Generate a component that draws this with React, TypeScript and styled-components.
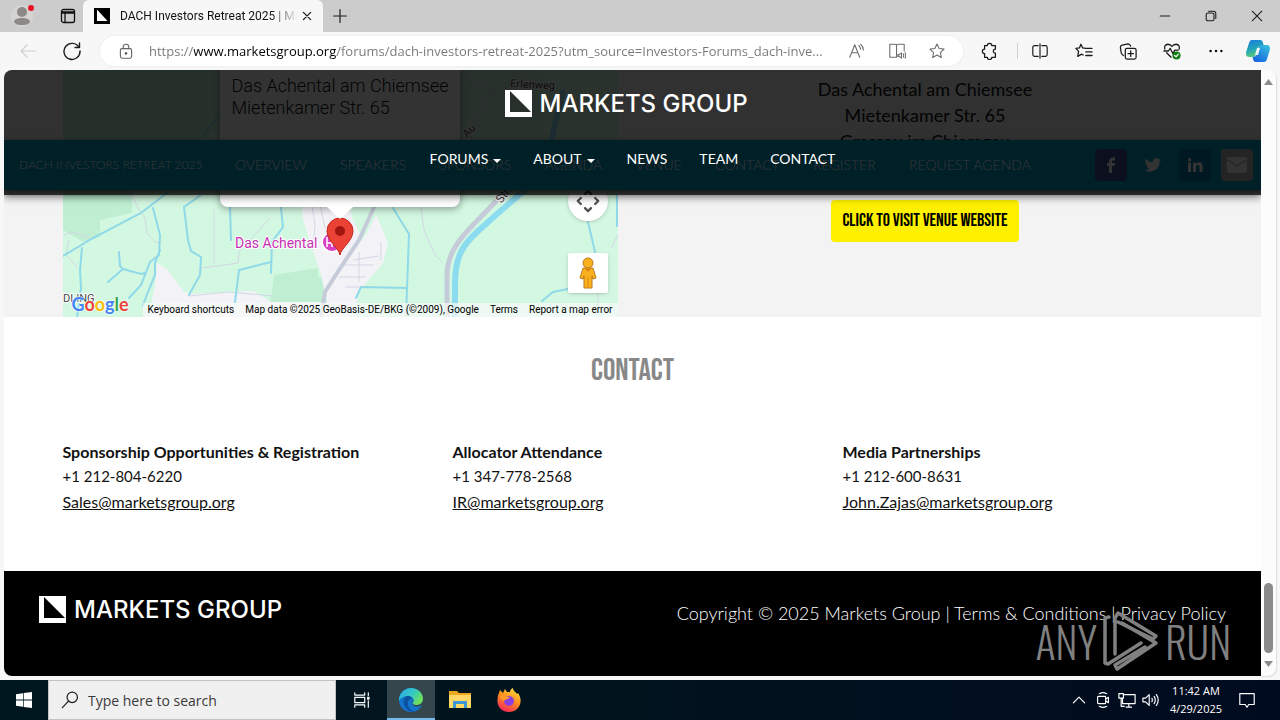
import React from "react";
import styled, { createGlobalStyle } from "styled-components";

const ui = `"Open Sans", "Noto Sans", sans-serif`;
const body = `Lato, "Open Sans", sans-serif`;
const narrow = `"Bebas Neue", "Oswald", "Liberation Sans Narrow", "Arial Narrow", sans-serif`;

const Global = createGlobalStyle`
  *, *::before, *::after { box-sizing: border-box; }
  body { margin: 0; background: #f7f7f7; font-family: ${body}; color: #111; }
  button { font: inherit; color: inherit; border: 0; padding: 0; background: none; }
  a { color: inherit; text-decoration: none; }
  h1, h2, h3, p, ul, address { margin: 0; padding: 0; font-style: normal; }
  ul { list-style: none; }
  svg { display: block; }
`;

const Desktop = styled.div`
  min-height: 100vh;
  display: flex;
  flex-direction: column;
`;

/* ---------- browser chrome ---------- */

const TabStrip = styled.header`
  display: flex;
  height: 32px;
  background: #cccccc;
  font-family: ${ui};
`;
const StripTools = styled.div`
  display: flex;
  align-items: center;
  gap: 24px;
  width: 83px;
  padding-left: 10px;
  border-radius: 0 0 6px 0;
`;
const Tab = styled.div`
  display: flex;
  align-items: center;
  width: 240px;
  padding: 0 10px 0 11px;
  background: #f7f7f7;
  border-radius: 6px 6px 0 0;
`;
const TabTitle = styled.span`
  flex: 1;
  margin-left: 10px;
  overflow: hidden;
  white-space: nowrap;
  font-family: Roboto, sans-serif;
  font-size: 12px;
  line-height: 16px;
  mask-image: linear-gradient(90deg, #000 150px, transparent 178px);
`;
const NewTab = styled.button`
  display: grid;
  place-items: center;
  width: 34px;
`;
const WindowButtons = styled.div`
  display: flex;
  margin-left: auto;
`;
const WindowButton = styled.button`
  display: grid;
  place-items: center;
  width: 46px;
`;

const Toolbar = styled.div`
  display: flex;
  align-items: center;
  height: 38px;
  padding: 0 2px 0 6px;
  background: #f7f7f7;
  font-family: ${ui};
`;
const ToolButton = styled.button<{ $w?: number }>`
  display: grid;
  place-items: center;
  flex: none;
  width: ${(p) => p.$w ?? 44}px;
  height: 30px;
`;
const ToolDivider = styled.span`
  width: 1px;
  height: 16px;
  margin: 0 0 0 5px;
  background: #cfcfcf;
`;
const AddressBar = styled.label`
  display: flex;
  align-items: center;
  flex: 1;
  min-width: 0;
  height: 30px;
  margin: 0 5px 0 6px;
  padding: 0 6px 0 18px;
  border-radius: 15px;
  background: #fff;
  box-shadow: 0 0 1px 1px #efefef;
`;
const AddressInput = styled.input`
  flex: 1;
  min-width: 0;
  margin-left: 15px;
  padding: 0;
  border: 0;
  outline: 0;
  font-family: ${ui};
  font-size: 13px;
  line-height: 20px;
  text-overflow: ellipsis;
  color: transparent;
  background: linear-gradient(90deg, #767676 45px, #000 45px, #000 187px, #767676 187px);
  background-clip: text;
  -webkit-background-clip: text;
`;

/* ---------- page frame ---------- */

const Viewport = styled.div`
  display: flex;
  flex: 1;
  padding: 0 4px 4px;
  background: #f7f7f7;
`;
const Page = styled.div`
  position: relative;
  display: flex;
  flex-direction: column;
  flex: 1;
  min-width: 0;
  overflow: hidden;
  border-radius: 8px 0 0 8px;
  background: #fff;
`;
const ScrollTrack = styled.div`
  display: flex;
  flex-direction: column;
  align-items: center;
  width: 15px;
  padding: 9px 0;
  border-radius: 0 8px 8px 0;
  background: #fcfcfc;
  box-shadow: 1px 1px 1px #dddddd;
`;
const ScrollThumb = styled.div`
  width: 9px;
  height: 70px;
  margin: auto 0 8px;
  border-radius: 5px;
  background: #8b8b8b;
`;

/* ---------- site header ---------- */

const SiteHeader = styled.header`
  position: absolute;
  inset: 0 0 auto 0;
  height: 125px;
  padding-top: 20px;
  display: flex;
  flex-direction: column;
  align-items: center;
  background: rgba(0, 0, 0, 0.8);
  box-shadow: 0 2px 8px rgba(0, 0, 0, 0.5);
  color: #fff;
`;
const Brand = styled.a`
  display: flex;
  align-items: center;
  gap: 8px;
  width: 256px;
  height: 27px;
  color: #fff;
  font-family: Inter, sans-serif;
  font-size: 24px;
  font-weight: 500;
  line-height: 27px;
  white-space: nowrap;
`;
const MainMenu = styled.ul`
  display: flex;
  gap: 32px;
  margin-top: 33px;
  font-size: 14px;
  line-height: 18px;
`;
const MenuLink = styled.a<{ $caret?: boolean }>`
  display: flex;
  align-items: center;
  gap: 5px;
  &::after {
    content: "";
    display: ${(p) => (p.$caret ? "block" : "none")};
    margin-top: 3px;
    border: 4px solid transparent;
    border-top-color: #fff;
    border-bottom: 0;
  }
`;

const EventBar = styled.nav`
  position: absolute;
  inset: 70px 0 auto 0;
  height: 50px;
  display: flex;
  align-items: center;
  padding: 0 8px 0 15px;
  background: #00a0c8;
  box-shadow: 0 2px 6px rgba(0, 0, 0, 0.6);
  color: #fff;
  font-weight: 300;
`;
const EventName = styled.a`
  width: 216px;
  font-size: 12px;
  line-height: 18px;
  white-space: nowrap;
`;
const EventLinks = styled.ul`
  display: flex;
  justify-content: space-between;
  width: 796px;
  font-size: 14px;
  line-height: 18px;
  white-space: nowrap;
`;
const SocialRow = styled.div`
  display: flex;
  gap: 10px;
  margin-left: auto;
`;
const Social = styled.a<{ $bg: string }>`
  display: grid;
  place-items: center;
  width: 32px;
  height: 32px;
  border-radius: 4px;
  background: ${(p) => p.$bg};
`;

/* ---------- venue ---------- */

const Container = styled.div`
  width: 100%;
  max-width: 1140px;
  margin: 0 auto;
`;
const Venue = styled.section`
  background: #f3f3f3;
`;
const VenueGrid = styled(Container)`
  display: grid;
  grid-template-columns: 1fr 1fr;
  gap: 30px;
`;
const VenueInfo = styled.div`
  display: flex;
  flex-direction: column;
  align-items: center;
  padding-top: 6px;
  text-align: center;
`;
const VenueAddress = styled.address`
  font-size: 18px;
  font-weight: 400;
  line-height: 26px;
`;
const VenueButton = styled.a`
  margin-top: 46px;
  padding: 0 11px;
  border-radius: 4px;
  background: #fff000;
  color: #000;
  font-family: ${narrow};
  font-size: 18px;
  font-weight: 400;
  line-height: 42px;
`;

const MapBox = styled.div`
  position: relative;
  height: 247px;
  overflow: hidden;
  background: #d3f8e2;
`;
const InfoWindow = styled.div`
  position: absolute;
  left: 157px;
  top: -20px;
  width: 240px;
  height: 157px;
  padding: 25px 12px;
  border-radius: 8px;
  background: #fff;
  box-shadow: 0 2px 7px 1px rgba(0, 0, 0, 0.3);
  font-family: Roboto, sans-serif;
  font-size: 18px;
  font-weight: 300;
  line-height: 22px;
  white-space: nowrap;
`;
const MapControl = styled.button<{ $top: number; $round?: boolean }>`
  position: absolute;
  right: 10px;
  top: ${(p) => p.$top}px;
  display: grid;
  place-items: center;
  width: 40px;
  height: 40px;
  border-radius: ${(p) => (p.$round ? "50%" : "2px")};
  background: #fff;
  box-shadow: 0 1px 4px -1px rgba(0, 0, 0, 0.3);
`;
const GoogleMark = styled.a`
  position: absolute;
  left: 9px;
  bottom: 2px;
  font-family: Lato, sans-serif;
  font-size: 18px;
  font-weight: 700;
  line-height: 22px;
  text-shadow: 0 0 2px #fff, 0 0 2px #fff;
`;
const Letter = styled.span<{ $c: string }>`
  color: ${(p) => p.$c};
`;
const MapCredits = styled.div`
  position: absolute;
  right: 0;
  bottom: 0;
  display: flex;
  gap: 11px;
  padding: 0 5px;
  background: rgba(245, 250, 247, 0.75);
  color: #000;
  font-family: Roboto, sans-serif;
  font-size: 10px;
  line-height: 14px;
  white-space: nowrap;
`;

/* ---------- contact ---------- */

const Contact = styled.section`
  flex: 1;
  padding: 34px 0 56px;
`;
const ContactTitle = styled.h2`
  color: #888;
  font-family: ${narrow};
  font-size: 31px;
  font-weight: 400;
  line-height: 40px;
  text-align: center;
`;
const ContactGrid = styled(Container)`
  display: grid;
  grid-template-columns: repeat(3, 1fr);
  gap: 30px;
  margin-top: 48px;
`;
const ContactCard = styled.div`
  font-size: 16px;
  line-height: 25px;
`;
const ContactName = styled.h3`
  font-size: 16px;
  font-weight: 700;
  line-height: 25px;
`;
const Phone = styled.p`
  font-size: 15px;
`;
const Mail = styled.a`
  text-decoration: underline;
`;

/* ---------- footer ---------- */

const Footer = styled.footer`
  position: relative;
  display: flex;
  justify-content: space-between;
  align-items: flex-start;
  min-height: 105px;
  padding: 25px 35px;
  background: #000;
  color: #fff;
`;
const Legal = styled.p`
  margin-top: 5px;
  font-size: 18px;
  font-weight: 300;
  line-height: 24px;
  white-space: nowrap;
`;
const Watermark = styled.div`
  position: absolute;
  right: 30px;
  bottom: 4px;
  display: flex;
  align-items: center;
  gap: 6px;
  color: #808080;
  font-family: "Oswald", "Liberation Sans Narrow", sans-serif;
  font-size: 42px;
  font-weight: 300;
  line-height: 62px;
`;

/* ---------- taskbar ---------- */

const Taskbar = styled.footer`
  display: flex;
  height: 40px;
  background: linear-gradient(90deg, #00171f 0%, #01141d 45%, #010b20 100%);
  color: #fff;
  font-family: ${ui};
`;
const TaskButton = styled.button<{ $w: number; $active?: boolean }>`
  display: grid;
  place-items: center;
  width: ${(p) => p.$w}px;
  height: 40px;
  background: ${(p) => (p.$active ? "#35464d" : "transparent")};
  box-shadow: ${(p) => (p.$active ? "inset 0 -2px #76b9ed" : "none")};
`;
const SearchBox = styled.label`
  display: flex;
  align-items: center;
  gap: 9px;
  width: 288px;
  padding: 0 12px;
  border: 1px solid #c4c4c4;
  background: #f0f0f0;
`;
const SearchInput = styled.input`
  flex: 1;
  min-width: 0;
  padding: 0;
  border: 0;
  outline: 0;
  background: none;
  font-family: ${ui};
  font-size: 14px;
  &::placeholder { color: #3a3a3a; opacity: 1; }
`;
const Tray = styled.div`
  display: flex;
  align-items: center;
  margin-left: auto;
  padding-right: 15px;
`;
const Clock = styled.button`
  width: 66px;
  font-size: 11px;
  line-height: 18px;
  text-align: center;
`;

/* ---------- drawings ---------- */

type IconProps = { size?: number; color?: string; sw?: number; children: React.ReactNode };
const Icon = ({ size = 20, color = "#1b1b1b", sw = 1.2, children }: IconProps) => (
  <svg width={size} height={size} viewBox="0 0 20 20" fill="none" stroke={color} strokeWidth={sw} strokeLinecap="round" strokeLinejoin="round" aria-hidden="true">
    {children}
  </svg>
);

const starPath = "M10 2.2l2.4 5 5.4.7-4 3.8 1 5.5-4.8-2.7-4.8 2.7 1-5.5-4-3.8 5.4-.7z";

const BrandMark = () => (
  <svg width="27" height="27" viewBox="0 0 27 27" aria-hidden="true">
    <path fill="#fff" fillRule="evenodd" d="M0 0H27V27H0ZM5 1V22H26Z" />
  </svg>
);

const Logo = () => (
  <Brand href="#home">
    <BrandMark />
    <span>MARKETS GROUP</span>
  </Brand>
);

const MapDrawing = () => (
  <svg width="100%" height="247" viewBox="0 0 555 247" preserveAspectRatio="xMidYMid slice" aria-hidden="true">
    <rect width="555" height="247" fill="#d3f8e2" />
    <path fill="#bfeed3" d="M0 0H160V60L69 100V143L37 150V167L20 172L0 160Z" />
    <path fill="#bfeed3" d="M211 205L255 198V207L267 209V236H207Z" />
    <path fill="#c6f1d8" d="M397 0H480V70L430 90L397 60Z" />
    <path fill="#f3f3f7" d="M94 193L104 199L121 222L130 224L190 221L208 232H264L258 205L240 150L238 120H310V137L325 173L320 193L297 220L290 247H86L92 215Z" />
    <path fill="#d3f8e2" d="M282 122H325L300 170L290 150Z" />
    <g fill="none" stroke="#d3d6e4" strokeWidth="1">
      <path d="M69 125L75 138L82 148L84 163L92 172H96" />
      <path d="M151 140V194M140 198L175 193L176 182L207 148" />
      <path d="M6 170L3 185L14 197M126 226L166 222L210 226" />
      <path d="M0 165L10 162L26 168M358 138L361 160L372 185L380 193" />
      <path d="M555 165L548 178M535 223V240" />
      <path d="M247 122L252 155L250 180M256 130L262 158M278 195H310M276 207H303M282 217H310M290 190L316 186M296 182V212M318 172V190" />
      <path d="M411 50L430 20L397 5M411 50L397 70" />
    </g>
    <g fill="none" stroke="#8fd9e8" strokeWidth="2" strokeLinecap="round">
      <path d="M0 186L30 168L78 143L105 122" />
      <path d="M19 178L17 200L18 218L14 247" />
      <path d="M90 138L97 165L96 185L87 192L78 215L66 228" />
      <path d="M97 180L92 193V205L85 222L80 235" />
      <path d="M56 182L57 196L60 199L45 212M60 199L78 204L82 203" />
      <path d="M138 125L121 137L125 170L128 181L138 187L137 205L126 225" />
      <path d="M167 137L168 170M216 120L220 157L209 172L208 203" />
      <path d="M172 232L176 200L208 192" />
      <path d="M330 138L346 164L343 246M293 228L298 217L344 218" />
      <path d="M525 152L532 182M479 231L490 222L505 219M554 125V156M505 100L515 120" />
      <path d="M140 66L157 44" />
    </g>
    <path d="M392 247V214C392 186 400 175 414 162L434 144L462 120L485 85L500 20" fill="none" stroke="#8cdcf0" strokeWidth="6" />
    <path d="M384 247V205C384 188 392 174 407 158L442 122L470 75" fill="none" stroke="#c5cbd9" strokeWidth="5" />
    <path d="M312 135L296 170L276 200L262 222L258 247" fill="none" stroke="#c5cbd9" strokeWidth="4" />
    <g fontFamily="Roboto, sans-serif" fill="#444" stroke="#fff" strokeWidth="2" paintOrder="stroke">
      <text x="447" y="17" fontSize="11" transform="rotate(3 447 17)">Erlenweg</text>
      <text x="404" y="68" fontSize="11" transform="rotate(-45 404 68)">Au</text>
      <text x="438" y="134" fontSize="12" transform="rotate(-50 438 134)">Str.</text>
      <text x="0" y="232" fontSize="11">DLING</text>
      <text x="172" y="178" fontSize="14" fill="#c82fb0">Das Achental</text>
    </g>
    <circle cx="269" cy="172" r="10" fill="#d83fc4" stroke="#fff" strokeWidth="2" />
    <path d="M264 167V177M269 167V177M264 173H269" stroke="#fff" strokeWidth="1.5" />
    <path d="M277 185C276 178 264 171 264 161A13 13 0 0 1 290 161C290 171 278 178 277 185Z" fill="#ea4335" stroke="#c5221f" strokeWidth="1" />
    <circle cx="277" cy="161" r="5" fill="#a11510" />
  </svg>
);

const InfoTail = styled.span`
  position: absolute;
  left: 107px;
  top: 157px;
  border: 13px solid transparent;
  border-top: 12px solid #fff;
  border-bottom: 0;
`;

const Pegman = () => (
  <svg width="20" height="32" viewBox="0 0 20 32" aria-hidden="true">
    <path d="M5 11H15L18 21L15 22L14 19V31H6V19L5 22L2 21Z" fill="#fbb01f" stroke="#b87a1c" strokeLinejoin="round" />
    <circle cx="10" cy="6" r="5" fill="#fbb01f" stroke="#b87a1c" />
    <path d="M6 11L10 15L14 11Z" fill="#d98912" />
    <path d="M10 20V30" stroke="#d98912" />
  </svg>
);

const EdgeIcon = () => (
  <svg width="26" height="26" viewBox="0 0 26 26" aria-hidden="true">
    <defs>
      <linearGradient id="eg" x1="0" y1="0" x2="1" y2="0.5">
        <stop offset="0" stopColor="#2aa8e6" />
        <stop offset="0.6" stopColor="#34c9c4" />
        <stop offset="1" stopColor="#6fe05c" />
      </linearGradient>
    </defs>
    <circle cx="13" cy="13" r="12" fill="#1474cc" />
    <path d="M1 12C2 5 7 1 13 1C20 1 25 6 25 12C25 16 22 18 18 18C15 18 14 17 15 15.500C17 12 14 9 10 9C6 9 2 11 1 14Z" fill="url(#eg)" />
    <path d="M10 9C5 10 4 16 8 21C10 24 14 25.500 17 24.500C11 23 8 17 11 13C12 11.500 13 12 14 12C14 10 12 9 10 9Z" fill="#0c52a0" />
    <path d="M14 12C15 13 15 14.500 14.500 16C14 18 16 19.500 19 19.500C21 19.500 23 19 24.500 17.500L26 20V12H25C25 16 22 18 18 18C15 18 14 17 15 15.500C16 14 15 12.500 14 12Z" fill="#35464d" />
  </svg>
);

const FolderIcon = () => (
  <svg width="24" height="22" viewBox="0 0 24 22" aria-hidden="true">
    <path d="M1 2H9L11 4H23V19H1Z" fill="#e9a820" />
    <path d="M1 6H23V19H1Z" fill="#ffd766" />
    <path d="M5 12H19V19H16V15H8V19H5Z" fill="#3c97d6" />
  </svg>
);

const FirefoxIcon = () => (
  <svg width="26" height="26" viewBox="0 0 26 26" aria-hidden="true">
    <defs>
      <linearGradient id="ff" x1="0.8" y1="0" x2="0.3" y2="1">
        <stop offset="0" stopColor="#ffe23e" />
        <stop offset="0.5" stopColor="#ff8a1e" />
        <stop offset="1" stopColor="#f5255c" />
      </linearGradient>
    </defs>
    <path d="M3 6L4 3L7 6L9 2L11 5C12 5 13 5 14 5C14 3 15 2 17 1C17 4 20 5 21 7L22 6C24 9 25 12 24.500 15C24 21 19 25 13 25C6 25 1 20 1.500 13C1.500 10 2 8 3 6Z" fill="url(#ff)" />
    <circle cx="13" cy="14" r="5" fill="#8a3fe0" />
    <path d="M4 9C8 8 10 10 14 10C12 13 9 12 8 14C6 13 4 12 4 9Z" fill="#ff9a24" />
  </svg>
);

const CopilotIcon = () => (
  <svg width="26" height="26" viewBox="0 0 26 26" aria-hidden="true">
    <defs>
      <linearGradient id="c1" x1="0" y1="0" x2="0.3" y2="1">
        <stop offset="0" stopColor="#1a7ae0" />
        <stop offset="0.6" stopColor="#22a8b8" />
        <stop offset="1" stopColor="#5cc97a" />
      </linearGradient>
      <linearGradient id="c2" x1="1" y1="0" x2="0.3" y2="1">
        <stop offset="0" stopColor="#38c4dc" />
        <stop offset="1" stopColor="#1668e0" />
      </linearGradient>
    </defs>
    <path d="M7 2H15C17 2 17.500 3 18 5L19 8H16C14 8 13 9 12.500 11L11 16C10.500 18 9.500 19 8 19H4C1 19 .5 16 1.500 13L4 5C4.500 3 5.500 2 7 2Z" fill="url(#c1)" />
    <path d="M19 24H11C9 24 8.500 23 8 21L7.500 19C10 19 11 18 11.500 16L13.500 10C14 8 15 7 17 7H22C25 7 25.500 10 24.500 13L22 21C21.500 23 20.500 24 19 24Z" fill="url(#c2)" />
    <path d="M12 10H15L13 17H10Z" fill="#eef8fb" />
  </svg>
);

const mainMenu = [
  { label: "FORUMS", caret: true },
  { label: "ABOUT", caret: true },
  { label: "NEWS" },
  { label: "TEAM" },
  { label: "CONTACT" },
];
const eventLinks = ["OVERVIEW", "SPEAKERS", "SPONSORS", "AGENDA", "VENUE", "CONTACT", "REGISTER", "REQUEST AGENDA"];
const contacts = [
  { name: "Sponsorship Opportunities & Registration", phone: "+1 212-804-6220", mail: "Sales@marketsgroup.org" },
  { name: "Allocator Attendance", phone: "+1 347-778-2568", mail: "IR@marketsgroup.org" },
  { name: "Media Partnerships", phone: "+1 212-600-8631", mail: "John.Zajas@marketsgroup.org" },
];
const googleLetters: [string, string][] = [
  ["G", "#4285f4"], ["o", "#ea4335"], ["o", "#fbbc05"], ["g", "#4285f4"], ["l", "#34a853"], ["e", "#ea4335"],
];

export default function App() {
  return (
    <Desktop>
      <Global />
      <TabStrip>
        <StripTools>
          <button aria-label="Profile">
            <svg width="26" height="26" viewBox="0 0 26 26">
              <circle cx="12" cy="13" r="11" fill="#d6d4d2" />
              <circle cx="12" cy="9" r="5" fill="#8c8987" />
              <path d="M4 19C4 16 8 15 12 15S20 16 20 19C18 22 15 22 12 22S6 22 4 19Z" fill="#8c8987" />
              <circle cx="21" cy="5" r="3" fill="#e81123" />
            </svg>
          </button>
          <button aria-label="Tab actions">
            <svg width="16" height="16" viewBox="0 0 16 16" fill="none" stroke="#111" strokeWidth="1.3">
              <rect x="1.500" y="1.500" width="13" height="13" rx="2" />
              <path d="M2 4.500H14" strokeWidth="2.500" />
              <path d="M5 5V14" />
            </svg>
          </button>
        </StripTools>
        <Tab>
          <svg width="16" height="16" viewBox="0 0 16 16" aria-hidden="true">
            <rect width="16" height="16" />
            <path d="M3 1.500L13.500 13H3Z" fill="#fff" />
          </svg>
          <TabTitle>DACH Investors Retreat 2025 | Markets Group</TabTitle>
          <button aria-label="Close tab">
            <Icon size={12} sw={2.2}><path d="M4 4L16 16M16 4L4 16" /></Icon>
          </button>
        </Tab>
        <NewTab aria-label="New tab">
          <Icon size={16} sw={1.5}><path d="M10 2V18M2 10H18" /></Icon>
        </NewTab>
        <WindowButtons>
          <WindowButton aria-label="Minimize"><Icon size={12} sw={1.7}><path d="M2 10H18" /></Icon></WindowButton>
          <WindowButton aria-label="Restore">
            <Icon size={12} sw={1.8}><rect x="2" y="5" width="13" height="13" rx="3" /><path d="M6 2H14Q18 2 18 6V14" /></Icon>
          </WindowButton>
          <WindowButton aria-label="Close"><Icon size={12} sw={1.8}><path d="M2 2L18 18M18 2L2 18" /></Icon></WindowButton>
        </WindowButtons>
      </TabStrip>

      <Toolbar>
        <ToolButton aria-label="Back"><Icon color="#cfcfcf"><path d="M18 10H3M9 4L3 10L9 16" /></Icon></ToolButton>
        <ToolButton aria-label="Refresh"><Icon sw={1.4}><path d="M17 6.500A8 8 0 1 0 18 10M17.500 2V6.500H13" /></Icon></ToolButton>
        <AddressBar>
          <Icon size={16} color="#666" sw={1.4}>
            <rect x="3" y="7" width="14" height="12" rx="2" /><path d="M6.500 7V5A3.500 3.500 0 0 1 13.500 5V7" /><circle cx="10" cy="13" r="1" fill="#666" />
          </Icon>
          <AddressInput
            aria-label="Address"
            readOnly
            value="https://www.marketsgroup.org/forums/dach-investors-retreat-2025?utm_source=Investors-Forums_dach-inve..."
          />
          <ToolButton $w={40} aria-label="Read aloud">
            <Icon size={18} color="#6d6d6d"><path d="M2 17L7.500 3L13 17M4 12H11M12 4Q14 6 14 8M14 2.500Q17 5 17 9" /></Icon>
          </ToolButton>
          <ToolButton $w={40} aria-label="Immersive reader">
            <Icon size={18} color="#6d6d6d">
              <path d="M9.500 3.500V17H2V2.500H8Q9.500 2.500 9.500 4Q9.500 2.500 11 2.500H18V10" /><path d="M11 14H12.500L15 12V18L12.500 16H11ZM17 13Q18 15 17 17M19 12Q20.500 15 19 18" />
            </Icon>
          </ToolButton>
          <ToolButton $w={40} aria-label="Add to favorites"><Icon size={18} color="#6d6d6d"><path d={starPath} /></Icon></ToolButton>
        </AddressBar>
        <ToolButton aria-label="Extensions">
          <Icon size={18} sw={1.4}><path d="M4 4H7A2.500 2.500 0 0 1 12 4H16V8A2.200 2.200 0 1 0 16 12.500V17H12A2.500 2.500 0 0 1 7 17H4V13A2.500 2.500 0 0 1 4 8Z" /></Icon>
        </ToolButton>
        <ToolDivider />
        <ToolButton aria-label="Split screen">
          <Icon size={18} sw={1.3}><path d="M8 4H4Q2 4 2 6V14Q2 16 4 16H8M12 4H16Q18 4 18 6V14Q18 16 16 16H12M10 2V18" /></Icon>
        </ToolButton>
        <ToolButton aria-label="Favorites">
          <Icon size={18} sw={1.4}><path d="M12 7L8.500 6.500L6.500 2.500L5 6.500L1 7L4 10.500L3 16L7.500 13.500L9 14.500M12 7H19M12 11H19M12 15H19" /></Icon>
        </ToolButton>
        <ToolButton aria-label="Collections">
          <Icon size={18} sw={1.4}><rect x="7" y="7" width="12" height="12" rx="2" /><path d="M13 10V16M10 13H16M5 15Q3 14 2.500 12L1.500 6Q1.500 4 3.500 3.500L10 2Q12 2 13 4.500" /></Icon>
        </ToolButton>
        <ToolButton aria-label="Browser essentials">
          <Icon size={18} sw={1.4}>
            <path d="M2 8Q1 3 5.500 2.500Q8.500 2.500 10 5Q11.500 2.500 14.500 2.500Q19 3 18 8M1 10H6L8 7L11 13L13 9H17M4 12L9 17" />
            <circle cx="15" cy="15" r="4.500" fill="#107c10" stroke="none" /><path d="M13 15L14.500 16.500L17 13.500" stroke="#fff" />
          </Icon>
        </ToolButton>
        <ToolButton aria-label="Settings and more">
          <Icon size={18} color="none"><g fill="#111"><circle cx="4" cy="10" r="1.400" /><circle cx="10" cy="10" r="1.400" /><circle cx="16" cy="10" r="1.400" /></g></Icon>
        </ToolButton>
        <ToolButton $w={40} aria-label="Copilot"><CopilotIcon /></ToolButton>
      </Toolbar>

      <Viewport>
        <Page>
          <Venue>
            <VenueGrid>
              <MapBox>
                <MapDrawing />
                <InfoWindow>
                  <p>Das Achental am Chiemsee</p>
                  <p>Mietenkamer Str. 65</p>
                  <InfoTail />
                </InfoWindow>
                <MapControl $top={111} $round aria-label="Map camera controls">
                  <Icon size={24} color="#555" sw={2}><path d="M7.500 4L10 1.500L12.500 4M7.500 16L10 18.500L12.500 16M4 7.500L1.500 10L4 12.500M16 7.500L18.500 10L16 12.500" /></Icon>
                </MapControl>
                <MapControl $top={183} aria-label="Street View"><Pegman /></MapControl>
                <GoogleMark href="#map" aria-label="Google">
                  {googleLetters.map(([ch, c], i) => <Letter key={i} $c={c}>{ch}</Letter>)}
                </GoogleMark>
                <MapCredits>
                  <button>Keyboard shortcuts</button>
                  <span>Map data ©2025 GeoBasis-DE/BKG (©2009), Google</span>
                  <a href="#terms">Terms</a>
                  <a href="#report">Report a map error</a>
                </MapCredits>
              </MapBox>
              <VenueInfo>
                <VenueAddress>
                  Das Achental am Chiemsee<br />Mietenkamer Str. 65<br />Grassau im Chiemgau
                </VenueAddress>
                <VenueButton href="#venue">CLICK TO VISIT VENUE WEBSITE</VenueButton>
              </VenueInfo>
            </VenueGrid>
          </Venue>

          <Contact>
            <ContactTitle>CONTACT</ContactTitle>
            <ContactGrid>
              {contacts.map((c) => (
                <ContactCard key={c.mail}>
                  <ContactName>{c.name}</ContactName>
                  <Phone>{c.phone}</Phone>
                  <p><Mail href={`mailto:${c.mail}`}>{c.mail}</Mail></p>
                </ContactCard>
              ))}
            </ContactGrid>
          </Contact>

          <Footer>
            <Logo />
            <Legal>
              Copyright © 2025 Markets Group | <a href="#conditions">Terms &amp; Conditions</a> | <a href="#privacy">Privacy Policy</a>
            </Legal>
            <Watermark>
              <span>ANY</span>
              <svg width="56" height="62" viewBox="0 0 56 62" fill="none" stroke="#808080" strokeWidth="3.500" strokeLinecap="round" strokeLinejoin="round" aria-hidden="true">
                <path d="M6 7L2 8V53L5 54L38 33" />
                <path d="M12 44V8L15 3L53 26L50 29L15 12" />
                <path d="M19 13L53 33L14 59L12 55L42 37" />
              </svg>
              <span>RUN</span>
            </Watermark>
          </Footer>

          <EventBar>
            <EventName href="#event">DACH INVESTORS RETREAT 2025</EventName>
            <EventLinks>
              {eventLinks.map((l) => <li key={l}><a href={`#${l.toLowerCase()}`}>{l}</a></li>)}
            </EventLinks>
            <SocialRow>
              <Social $bg="#3b4a98" href="#facebook" aria-label="Facebook">
                <svg width="16" height="16" viewBox="0 0 16 16" fill="#fff"><path d="M6 16V9H4V6H6V4.500C6 2 7.500 .5 10 .5H12V3.500H10.500C9.500 3.500 9 4 9 5V6H12L11.500 9H9V16Z" /></svg>
              </Social>
              <Social $bg="transparent" href="#twitter" aria-label="Twitter">
                <svg width="18" height="18" viewBox="0 0 24 24" fill="#fff"><path d="M23 5a9 9 0 0 1-2.600.7 4.500 4.500 0 0 0 2-2.500 9 9 0 0 1-2.900 1.100 4.500 4.500 0 0 0-7.700 4.100A12.800 12.800 0 0 1 2.500 3.700a4.500 4.500 0 0 0 1.400 6 4.500 4.500 0 0 1-2-.6 4.500 4.500 0 0 0 3.600 4.500 4.500 4.500 0 0 1-2 .1 4.500 4.500 0 0 0 4.200 3.100A9 9 0 0 1 1 18.700 12.800 12.800 0 0 0 20.700 7.300 9 9 0 0 0 23 5z" /></svg>
              </Social>
              <Social $bg="#0077a8" href="#linkedin" aria-label="LinkedIn">
                <svg width="16" height="16" viewBox="0 0 16 16" fill="#fff"><path d="M1 5.500H4V15H1ZM2.500 1A1.700 1.700 0 1 1 2.500 4.400A1.700 1.700 0 1 1 2.500 1ZM6 5.500H9V7C9.500 6 10.500 5.300 12 5.300C15 5.300 15.500 7.300 15.500 10V15H12.500V10.500C12.500 9 12.300 8 11 8C9.500 8 9 9 9 10.500V15H6Z" /></svg>
              </Social>
              <Social $bg="#b5b5b5" href="#email" aria-label="Email">
                <svg width="20" height="16" viewBox="0 0 20 16"><rect width="20" height="16" rx="2" fill="#fff" /><path d="M1 3L10 9L19 3" fill="none" stroke="#b5b5b5" strokeWidth="1.500" /></svg>
              </Social>
            </SocialRow>
          </EventBar>

          <SiteHeader>
            <Logo />
            <nav>
              <MainMenu>
                {mainMenu.map((m) => (
                  <li key={m.label}><MenuLink $caret={m.caret} href={`#site-${m.label.toLowerCase()}`}>{m.label}</MenuLink></li>
                ))}
              </MainMenu>
            </nav>
          </SiteHeader>
        </Page>
        <ScrollTrack>
          <svg width="9" height="6" viewBox="0 0 9 6" aria-hidden="true"><path d="M0 6L4.500 0L9 6Z" fill="#8b8b8b" /></svg>
          <ScrollThumb />
          <svg width="9" height="6" viewBox="0 0 9 6" aria-hidden="true"><path d="M0 0L4.500 6L9 0Z" fill="#8b8b8b" /></svg>
        </ScrollTrack>
      </Viewport>

      <Taskbar>
        <TaskButton $w={48} aria-label="Start">
          <svg width="16" height="16" viewBox="0 0 16 16" fill="#fff"><path d="M0 2.200L7 1.200V7.600H0ZM7.700 1.100L16 0V7.600H7.700ZM0 8.400H7V14.800L0 13.800ZM7.700 8.400H16V16L7.700 14.900Z" /></svg>
        </TaskButton>
        <SearchBox>
          <Icon size={18} color="#222" sw={1.4}><circle cx="12.500" cy="7" r="5.800" /><path d="M8.300 11.200L1.500 18.500" /></Icon>
          <SearchInput aria-label="Search" placeholder="Type here to search" />
        </SearchBox>
        <TaskButton $w={51} aria-label="Task view">
          <Icon size={18} color="#fff" sw={1.3}><path d="M2 2V4.500H13V2M2 18V15.500H13V18M2 7H13V13H2ZM17 2V5M17 11V18" /><rect x="16.200" y="7" width="1.600" height="2" fill="#fff" /></Icon>
        </TaskButton>
        <TaskButton $w={48} $active aria-label="Microsoft Edge"><EdgeIcon /></TaskButton>
        <TaskButton $w={49} aria-label="File Explorer"><FolderIcon /></TaskButton>
        <TaskButton $w={49} aria-label="Firefox"><FirefoxIcon /></TaskButton>
        <Tray>
          <TaskButton $w={24} aria-label="Show hidden icons"><Icon size={14} color="#fff" sw={1.7}><path d="M2 14L10 6L18 14" /></Icon></TaskButton>
          <TaskButton $w={24} aria-label="Meet now">
            <Icon size={18} color="#fff" sw={1.3}><rect x="4" y="6" width="9" height="8" rx="1" /><path d="M13 9L16 7V13L13 11M6 3Q10 .5 14 3M6 17Q10 19.500 14 17" /></Icon>
          </TaskButton>
          <TaskButton $w={24} aria-label="Network">
            <Icon size={18} color="#fff" sw={1.3}><path d="M7 4H19V14H5V9M9 18H15M12 14V18M1 3H6V8H1ZM3.500 8V17H7" /></Icon>
          </TaskButton>
          <TaskButton $w={24} aria-label="Volume">
            <Icon size={18} color="#fff" sw={1.3}><path d="M1 8H4L8 4V16L4 12H1ZM11 8Q12 10 11 12M13.500 6Q16 10 13.500 14M16 4Q20 10 16 16" /></Icon>
          </TaskButton>
          <Clock>11:42 AM<br />4/29/2025</Clock>
          <TaskButton $w={36} aria-label="Notifications">
            <Icon size={18} color="#fff" sw={1.3}><path d="M2 3H18V15H12L10 18L8 15H2Z" /></Icon>
          </TaskButton>
        </Tray>
      </Taskbar>
    </Desktop>
  );
}
